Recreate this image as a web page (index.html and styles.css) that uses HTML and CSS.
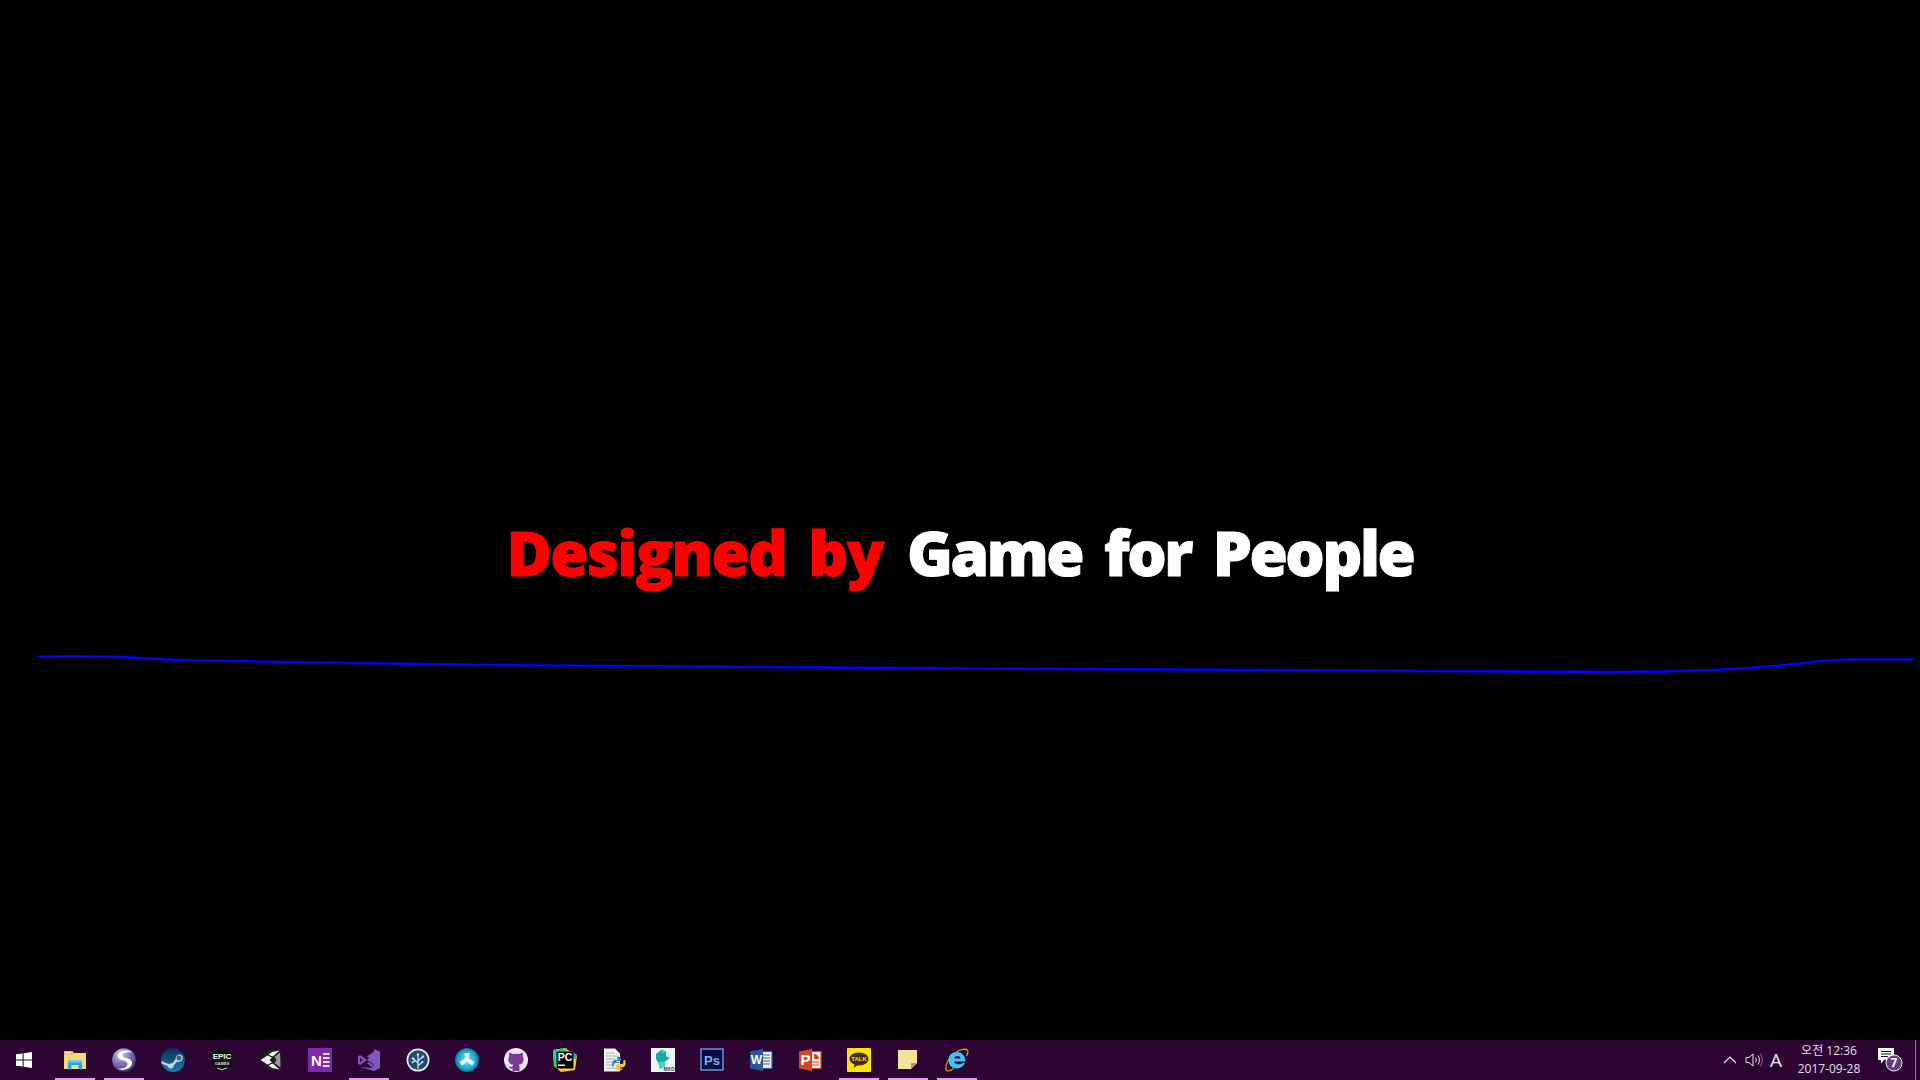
FILE: index.html
```html
<!DOCTYPE html>
<html>
<head>
    <meta charset="UTF-8">
    <title>Designed by Game for People</title>
    <link rel="stylesheet" href="styles.css">
</head>
<body>
    <div id="stage">
        <h1 class="credit"><span class="red">Designed by</span> <span class="white">Game for People</span></h1>
        <svg class="wave" width="1920" height="40" viewBox="0 640 1920 40">
            <path d="M38 656.6 C70 656.3 100 656.3 122 657 C145 658 165 660 196 660.5 C300 662.5 400 663 490 665 C600 666.5 800 667 980 668.5 C1200 669.5 1400 671 1592 671.8 C1630 672 1670 671.5 1714 670 C1750 668 1775 666.5 1800 663.5 C1820 660.5 1835 659.5 1860 659.4 L1914 659.4" fill="none" stroke="#0000ff" stroke-width="2.4"/>
        </svg>
    </div>

    <div id="taskbar">
        <div class="start">
            <svg width="18" height="18" viewBox="0 0 18 18"><path d="M1 3.3 L7.6 2.4 V8.4 H1 Z M8.6 2.2 L17 1 V8.4 H8.6 Z M1 9.4 H7.6 V15.6 L1 14.7 Z M8.6 9.4 H17 V17 L8.6 15.8 Z" fill="#fff"/></svg>
        </div>

        <div class="app open"><!-- explorer -->
            <svg width="24" height="24" viewBox="0 0 24 24"><path d="M1 3 H9 L11 5 H23 V21 H1 Z" fill="#f6d878"/><path d="M1 3 H9 L11 5 V6.5 H1 Z" fill="#e8b848"/><rect x="2" y="4" width="6" height="1.4" fill="#fdf0c0"/><path d="M5 13 H19 V21.5 H15.5 V17 H8.5 V21.5 H5 Z" fill="#2ba6e2"/><rect x="5" y="12" width="14" height="2.5" fill="#71c8f0"/></svg>
        </div>
        <div class="app open"><!-- selena -->
            <svg width="24" height="24" viewBox="0 0 24 24"><defs><radialGradient id="sel" cx="0.35" cy="0.25" r="0.9"><stop offset="0" stop-color="#c8c4e4"/><stop offset="0.55" stop-color="#6f68ac"/><stop offset="1" stop-color="#25204a"/></radialGradient></defs><circle cx="12" cy="12" r="11.8" fill="url(#sel)"/><path d="M21 4.5 C14 0.5 5 3 5.5 8 C6 13 15.5 11.5 15.5 16 C15.5 19 11 21.5 5 20.5 C11 23.5 20 21 20 15 C20 9 11 11 10.5 7.5 C10.5 5 16 3.8 21 4.5 Z" fill="#fff"/></svg>
        </div>
        <div class="app"><!-- steam -->
            <svg width="24" height="24" viewBox="0 0 24 24"><defs><linearGradient id="stm" x1="0" y1="0" x2="0" y2="1"><stop offset="0" stop-color="#0e2a50"/><stop offset="1" stop-color="#1280b0"/></linearGradient></defs><circle cx="12" cy="12" r="12" fill="url(#stm)"/><path d="M0.2 13 L8 16.3 C9 15.3 10.4 15.1 11.4 15.4 L14.5 11 C14.5 8 17 6 19 6.5 C21.5 7 22.5 9.5 21.5 11.5 C20.5 13.5 18.5 14.3 16 13.8 L12.8 17.5 C12.5 20.5 9.5 21.2 7.5 19.5 C7 19 6.8 18.6 6.7 18 L0.8 15.7 Z" fill="#c8d4e0"/><circle cx="18" cy="10" r="2.5" fill="#38618a"/></svg>
        </div>
        <div class="app"><!-- epic -->
            <svg width="24" height="24" viewBox="0 0 24 24"><path d="M3 1 C2 1 1.5 1.5 1.5 2.5 V19 L12 23.5 L22.5 19 V2.5 C22.5 1.5 22 1 21 1 Z" fill="#111"/><text class="epic-a" x="12" y="11" text-anchor="middle">EPIC</text><text class="epic-b" x="12" y="16.5" text-anchor="middle">GAMES</text><path d="M7 20 L12 21.8 L17 20" stroke="#fff" stroke-width="0.8" fill="none"/></svg>
        </div>
        <div class="app"><!-- unity -->
            <svg width="24" height="24" viewBox="0 0 24 24"><path d="M13 0.5 L22 3 L23 18 L14 23.5 L4 18 L0.5 12 L4 6 Z" fill="#1c1c1c"/><path d="M20.5 2.5 L13 4 L9.5 6.8 L14 8.5 Z M13 9.5 L8.5 7.5 L1.5 12 L8.5 16.5 L13 14.5 L10.5 12 Z M14 15.5 L9.5 17.2 L13 20 L20.5 21.5 Z" fill="#f0f0f0"/><path d="M15.5 9 L21 4.5 L21.5 19.5 L15.5 15 L17.5 12 Z" fill="#9a9a9a"/></svg>
        </div>
        <div class="app"><!-- onenote -->
            <svg width="24" height="24" viewBox="0 0 24 24"><rect width="24" height="24" fill="#7b2bb0"/><path d="M15 6 H21.5 M15 10 H21.5 M15 14 H21.5 M15 18 H21.5" stroke="#efe2f6" stroke-width="2"/><text class="ico-n" x="8.5" y="17.5" text-anchor="middle">N</text></svg>
        </div>
        <div class="app open"><!-- visual studio -->
            <svg width="24" height="24" viewBox="0 0 24 24"><path d="M17 1 L23 3.6 V20 L17 23 L3 19 L17 20 Z" fill="#7e57c2"/><path d="M17 5 V18 L10 12 Z M10 8.5 L17 3.5 V7 L13 10.5 Z M10 15.5 L17 20.5 V17 L13 13.5 Z" fill="#7e57c2"/><path d="M1 8.5 L3 7 L10 12 L3 17 L1 15.5 V8.5 Z M3 10 V14 L6 12 Z" fill="#7e57c2" fill-rule="evenodd"/></svg>
        </div>
        <div class="app"><!-- sourcetree -->
            <svg width="24" height="24" viewBox="0 0 24 24"><circle cx="12" cy="12" r="11.5" fill="#e8eef4"/><circle cx="12" cy="12" r="9.8" fill="#1f4a78"/><path d="M12 21 V7 M12 15 L7.5 11 M12 13 L16.5 9 M12 17.5 L16 14.5 M9.5 13 L7 14" stroke="#dfe8f0" stroke-width="1.2" fill="none"/><circle cx="12" cy="6.5" r="1.2" fill="#dfe8f0"/><circle cx="7" cy="10.5" r="1.2" fill="#dfe8f0"/><circle cx="17" cy="8.5" r="1.2" fill="#dfe8f0"/><circle cx="16.5" cy="14" r="1.1" fill="#dfe8f0"/><circle cx="6.5" cy="14.2" r="1" fill="#dfe8f0"/></svg>
        </div>
        <div class="app"><!-- trident -->
            <svg width="24" height="24" viewBox="0 0 24 24"><defs><radialGradient id="tri" cx="0.5" cy="0.5" r="0.55"><stop offset="0" stop-color="#7fe2f2"/><stop offset="0.7" stop-color="#1aa6d0"/><stop offset="1" stop-color="#0a4f70"/></radialGradient></defs><circle cx="12" cy="12" r="12" fill="url(#tri)"/><path d="M9.5 5 H14.5 L13.8 10.5 L19.5 14 L17 17.5 L12 13.8 L7 17.5 L4.5 14 L10.2 10.5 Z" fill="#eafaff"/></svg>
        </div>
        <div class="app"><!-- github -->
            <svg width="24" height="24" viewBox="0 0 24 24"><circle cx="12" cy="12" r="12" fill="#f0e8f6"/><path d="M5.5 4.5 L9 6 C11 5.5 13 5.5 15 6 L18.5 4.5 C19 6 19 7.5 18.8 8.5 C20 10 20 13 18.5 15 C17.5 16 16 16.6 14.8 16.8 C15.3 17.5 15.5 18 15.5 19 V23 H8.5 V20.5 C6.5 21 5 20 4.5 18.5 C5.5 19 6.5 19.3 8.5 18.5 C8.5 17.8 8.7 17.2 9.2 16.8 C8 16.6 6.5 16 5.5 15 C4 13 4 10 5.2 8.5 C5 7.5 5 6 5.5 4.5 Z" fill="#7a3b90"/></svg>
        </div>
        <div class="app"><!-- pycharm -->
            <svg width="24" height="24" viewBox="0 0 24 24"><path d="M0 2 L12 0 L24 8 L22 22 L8 24 L1 18 Z" fill="#f2d02c"/><path d="M0 2 L14 0 L6 20 L1 18 Z" fill="#21d789"/><path d="M18 2 L24 7 L22 12 Z" fill="#14a8e0"/><rect x="3.5" y="3.5" width="17" height="17" fill="#000"/><text class="ico-pc" x="4.8" y="13">PC</text><rect x="5" y="16.5" width="7" height="1.4" fill="#fff"/></svg>
        </div>
        <div class="app"><!-- python file -->
            <svg width="24" height="24" viewBox="0 0 24 24"><path d="M2 0.5 H13 L18 5.5 V23.5 H2 Z" fill="#f0f0f0"/><path d="M4 5 H12 M4 8 H15 M4 11 H15 M4 14 H13 M4 17 H13 M4 20 H15" stroke="#a9a9a9" stroke-width="0.9"/><path d="M15 9 C18 8.5 19 9.5 19 11 V13 H14.5 V14 H19 C19 15 13 15 12 15.5 L11 19 C9.5 18 9.5 12 13 12 H16 V11 C15 11 14.8 10 15 9 Z" fill="#3a7ac0"/><path d="M23 12 C24 14 24 19 20.5 19.5 H17.5 V20.5 H20.5 C20.5 23 14 23.5 14 20 V17.5 C14 16 15 16 16 16 H20 C21.5 16 21.5 14 21.5 12 Z" fill="#f6c83c"/></svg>
        </div>
        <div class="app"><!-- 3ds max file -->
            <svg width="24" height="24" viewBox="0 0 24 24"><rect width="24" height="24" fill="#eef6f6"/><path d="M5 6 L11 1.5 L15 3.5 L15 8 L19 10 L14 13.5 L14 18 L9 21 L7 14 L5 11 Z" fill="#1fa5a0"/><path d="M11 1.5 L15 3.5 L11 6 Z M7 14 L14 13.5 L14 18 L9 21 Z" fill="#4ccfc4"/><text class="ico-mxd" x="23.5" y="23" text-anchor="end">MXD</text></svg>
        </div>
        <div class="app"><!-- photoshop -->
            <svg width="24" height="24" viewBox="0 0 24 24"><rect x="1" y="1" width="22" height="21" fill="#0a0a42" stroke="#6d9bd8" stroke-width="1.4"/><text class="ico-ps" x="12" y="16.5" text-anchor="middle">Ps</text></svg>
        </div>
        <div class="app"><!-- word -->
            <svg width="24" height="24" viewBox="0 0 24 24"><rect x="10" y="3.5" width="13" height="17" fill="#f4f6fa" stroke="#2f5aa8" stroke-width="1.2"/><path d="M14 7 H21 M14 10 H21 M14 13 H21 M14 16 H21" stroke="#2f5aa8" stroke-width="1.2"/><path d="M1 3.5 L14 1 V23 L1 20.5 Z" fill="#2b579a"/><text class="ico-w" x="7.5" y="16" text-anchor="middle">W</text></svg>
        </div>
        <div class="app"><!-- powerpoint -->
            <svg width="24" height="24" viewBox="0 0 24 24"><rect x="10" y="3.5" width="13" height="17" fill="#f8f0ec" stroke="#d24726" stroke-width="1.2"/><path d="M16 6 A5 5 0 0 1 21 11 H16 Z" fill="#d24726"/><path d="M14 14 H21 M14 17 H21" stroke="#d24726" stroke-width="1.2"/><path d="M1 3.5 L14 1 V23 L1 20.5 Z" fill="#d24726"/><text class="ico-p" x="7.5" y="16.5" text-anchor="middle">P</text></svg>
        </div>
        <div class="app open"><!-- kakaotalk -->
            <svg width="24" height="24" viewBox="0 0 24 24"><rect width="24" height="24" rx="1" fill="#ffe400"/><path d="M12 4.5 C18 4.5 21.5 7.5 21.5 11 C21.5 14.5 18 17.5 12 17.5 L10 17.5 L6.5 20 L7.5 16.5 C4.5 15.5 2.5 13.5 2.5 11 C2.5 7.5 6 4.5 12 4.5 Z" fill="#3d2b1f"/><text class="ico-talk" x="12" y="13" text-anchor="middle">TALK</text></svg>
        </div>
        <div class="app open"><!-- sticky notes -->
            <svg width="24" height="24" viewBox="0 0 24 24"><path d="M2 2 H21 V15 L15 21 H2 Z" fill="#f0e49c"/><path d="M21 15 L15 21 V15 Z" fill="#a89880"/></svg>
        </div>
        <div class="app open"><!-- internet explorer -->
            <svg width="24" height="24" viewBox="0 0 24 24"><path d="M22 1.5 C17 0 9 4 4 11 C1 16 0 21 1.5 22.5 C3 23.5 6 22.5 8.5 20.5" fill="none" stroke="#d8a020" stroke-width="1.2"/><path d="M18 1.5 C21 1 23 2 23 4 C23 5.5 22 7 21.5 8" fill="none" stroke="#d8a020" stroke-width="1.2"/><path d="M12 4 C17 4 20.5 8 20.5 13.5 H9 C9.5 16.5 14.5 17.5 18 14.8 H20 C18.5 18.5 15.5 20.5 12 20.5 C7 20.5 3.5 17 3.5 12 C3.5 7.5 7 4 12 4 Z M9 10.5 H15.5 C15 7.3 10 7.3 9 10.5 Z" fill="#3cc6f4" fill-rule="evenodd"/></svg>
        </div>

        <div class="tray">
            <svg class="chevron" width="14" height="8" viewBox="0 0 14 8"><path d="M1 7 L7 1 L13 7" fill="none" stroke="#f0e8f2" stroke-width="1.1"/></svg>
            <svg class="speaker" width="18" height="16" viewBox="0 0 18 16"><path d="M1 5.5 H4 L8 2 V14 L4 10.5 H1 Z" fill="none" stroke="#e8dfea" stroke-width="1"/><path d="M10.5 5.5 C11.5 7 11.5 9 10.5 10.5 M13 3.5 C14.8 6 14.8 10 13 12.5" fill="none" stroke="#e8dfea" stroke-width="1"/><path d="M15.3 1.5 C17.8 5.5 17.8 10.5 15.3 14.5" fill="none" stroke="#8f7a96" stroke-width="1"/></svg>
            <span class="lang">A</span>
            <div class="clock">
                <span>오전 12:36</span>
                <span>2017-09-28</span>
            </div>
            <div class="notify">
                <svg width="32" height="32" viewBox="0 0 32 32"><path d="M2 4 H18 V16 H8 L5 19.5 V16 H2 Z" fill="#fff"/><path d="M5 7.5 H15 M5 10 H15 M5 12.5 H12" stroke="#2e0533" stroke-width="1"/><circle cx="18" cy="19" r="8" fill="#6b3b84" stroke="#f2ecf4" stroke-width="1"/><text class="badge" x="18" y="23" text-anchor="middle">7</text></svg>
            </div>
            <div class="show-desktop"></div>
        </div>
    </div>
</body>
</html>
```

FILE: styles.css
```css
html, body {
    margin: 0;
    padding: 0;
    height: 100%;
    background-color: #000;
    overflow: hidden;
}

body {
    display: flex;
    flex-direction: column;
}

#stage {
    flex: 1;
    display: flex;
    flex-direction: column;
    align-items: center;
}

.credit {
    margin: 514px 0 0 0;
    height: 126px;
    font-family: "Open Sans", sans-serif;
    font-size: 62px;
    font-weight: 800;
    line-height: 76px;
    white-space: nowrap;
    word-spacing: 8px;
    -webkit-text-stroke: 1px;
}

.red {
    color: #ff0000;
    letter-spacing: -1.7px;
}

.white {
    color: #fff;
    letter-spacing: -2.4px;
}

.wave {
    display: block;
}

#taskbar {
    height: 40px;
    background-color: #2d0533;
    display: flex;
    align-items: stretch;
}

.start {
    width: 50px;
    display: flex;
    align-items: center;
    justify-content: center;
    padding-right: 2px;
    box-sizing: border-box;
}

.app {
    width: 49px;
    position: relative;
    display: flex;
    align-items: center;
    justify-content: center;
}

.open::after {
    content: "";
    position: absolute;
    left: 5px;
    bottom: 0;
    width: 40px;
    height: 2px;
    background-color: #e59cf0;
}

.tray {
    margin-left: auto;
    display: flex;
    align-items: center;
    color: #f0e8f2;
}

.chevron {
    margin-right: 8px;
}

.speaker {
    margin-right: 1px;
}

.lang {
    font-family: "Open Sans", sans-serif;
    font-size: 19px;
    width: 24px;
    margin-right: 3px;
    text-align: center;
}

.clock {
    width: 76px;
    display: flex;
    flex-direction: column;
    align-items: center;
    font-family: "Open Sans", "Noto Sans CJK KR", sans-serif;
    font-size: 12px;
    line-height: 18px;
    color: #e8dfea;
}

.notify {
    width: 48px;
    height: 40px;
    box-sizing: border-box;
    padding-left: 2px;
    display: flex;
    align-items: center;
    justify-content: center;
}

.show-desktop {
    width: 5px;
    height: 40px;
    box-sizing: border-box;
    border-left: 1px solid #8f7a96;
}

.epic-a {
    font-family: "Liberation Sans", sans-serif;
    font-size: 8px;
    font-weight: 700;
    fill: #fff;
}

.epic-b {
    font-family: "Liberation Sans", sans-serif;
    font-size: 4px;
    font-weight: 700;
    fill: #ddd;
}

.ico-n {
    font-family: "Liberation Sans", sans-serif;
    font-size: 15px;
    font-weight: 700;
    fill: #fff;
}

.ico-pc {
    font-family: "Liberation Sans", sans-serif;
    font-size: 10.5px;
    font-weight: 700;
    fill: #fff;
}

.ico-mxd {
    font-family: "Liberation Sans", sans-serif;
    font-size: 5px;
    font-weight: 700;
    fill: #444;
}

.ico-ps {
    font-family: "Liberation Sans", sans-serif;
    font-size: 13px;
    font-weight: 700;
    fill: #7fb2f0;
}

.ico-w {
    font-family: "Liberation Sans", sans-serif;
    font-size: 12px;
    font-weight: 700;
    fill: #fff;
}

.ico-p {
    font-family: "Liberation Sans", sans-serif;
    font-size: 15px;
    font-weight: 700;
    fill: #fff;
}

.ico-talk {
    font-family: "Liberation Sans", sans-serif;
    font-size: 6px;
    font-weight: 700;
    fill: #ffe400;
}

.badge {
    font-family: "Open Sans", sans-serif;
    font-size: 12px;
    font-weight: 700;
    fill: #fff;
}
```
